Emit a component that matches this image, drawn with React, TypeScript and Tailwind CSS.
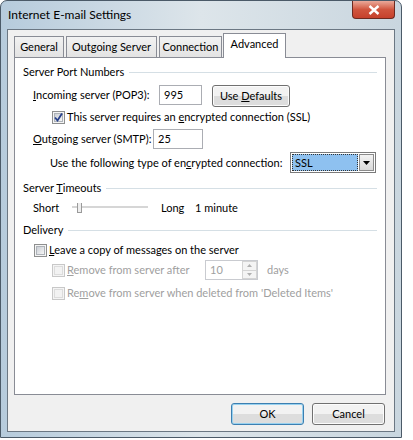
import React from "react";

// Vista-style "Internet E-mail Settings" dialog, Advanced tab

function CheckBox({ checked = false, disabled = false }: { checked?: boolean; disabled?: boolean }) {
  return (
    <span
      className={`flex h-[13px] w-[13px] shrink-0 items-center justify-center border ${
        disabled ? "border-[#c8c8c8] bg-[#f4f4f4]" : "border-[#8e8f8f] bg-[#f4f4f4]"
      }`}
    >
      <span
        className={`flex h-[9px] w-[9px] items-center justify-center border ${
          disabled
            ? "border-[#dcdcdc] bg-[#f2f2f2]"
            : "border-[#aeb3b9] bg-gradient-to-br from-[#cbcfd5] to-[#f6f6f6]"
        }`}
      >
        {checked && (
          <svg width="9" height="9" viewBox="0 0 9 9" className="overflow-visible">
            <path d="M1 4.5 L3.5 7.5 L8 0.5" fill="none" stroke="#27408b" strokeWidth="1.8" />
          </svg>
        )}
      </span>
    </span>
  );
}

function GroupTitle({ children }: { children: React.ReactNode }) {
  return (
    <div className="flex h-[16px] items-center pl-[8px] pr-[8px]">
      <span className="whitespace-nowrap pr-[5px]">{children}</span>
      <div className="h-0 flex-1 border-t border-[#d5dfe5]" />
    </div>
  );
}

function Button({ children, className = "", primary = false }: { children: React.ReactNode; className?: string; primary?: boolean }) {
  return (
    <div
      className={`flex h-[22px] items-center justify-center rounded-[3px] border ${
        primary ? "border-[#3c7fb1] shadow-[inset_0_0_0_1px_#98d1ef]" : "border-[#707070] shadow-[inset_0_0_0_1px_#fcfcfc]"
      } bg-gradient-to-b from-[#f2f2f2] from-50% to-[#dddddd] to-50% ${className}`}
    >
      <span className="whitespace-nowrap">{children}</span>
    </div>
  );
}

const tabs = [
  { label: "General", w: "w-[50px]" },
  { label: "Outgoing Server", w: "w-[91px]" },
  { label: "Connection", w: "w-[63px]" },
];

export default function App() {
  return (
    <div className="h-[440px] w-[413px] bg-white font-['Lato',sans-serif] text-[11px] leading-[16px] text-black">
      <div className="flex h-[438px] w-[402px] flex-col rounded-t-[7px] border border-[#4b5a68] bg-gradient-to-r from-[#b6cbdc] via-[#dde5ea] to-[#c9d6df]">
        {/* title bar */}
        <div className="flex h-[28px] shrink-0 items-start justify-between pl-[7px] pr-[6px]">
          <span className="pt-[6px] text-[12px] text-black">Internet E-mail Settings</span>
          <div className="flex h-[18px] w-[43px] items-center justify-center rounded-b-[4px] border border-t-0 border-[#6d2a20] bg-gradient-to-b from-[#e9a99a] via-[#d0553e] to-[#c6412c]">
            <svg width="12" height="10" viewBox="0 0 12 10">
              <path d="M1.5 1 L10.5 9 M10.5 1 L1.5 9" stroke="#ffffff" strokeWidth="2.4" />
            </svg>
          </div>
        </div>

        {/* client area */}
        <div className="mx-[6px] mb-[5px] flex flex-1 flex-col border border-[#6b7783] bg-[#f0f0f0]">
          {/* tabs */}
          <div className="mt-[3px] flex h-[24px] items-end pl-[6px]">
            {tabs.map((t) => (
              <div
                key={t.label}
                className={`mr-[2px] flex h-[21px] items-center justify-center whitespace-nowrap border border-b-0 border-[#898c95] bg-gradient-to-b from-[#f2f2f2] to-[#e3e3e3] ${t.w}`}
              >
                {t.label}
              </div>
            ))}
            <div className="relative -mb-px ml-[-1px] flex h-[25px] w-[63px] items-start justify-center border border-b-0 border-[#898c95] bg-white pt-[2px]">
              Advanced
            </div>
          </div>

          {/* tab panel */}
          <div className="ml-[6px] flex h-[338px] w-[372px] flex-col border border-[#898c95] bg-white">
            <div className="mt-[6px]">
              <GroupTitle>Server Port Numbers</GroupTitle>
            </div>

            <div className="mt-[5px] flex h-[22px] items-start pl-[18px]">
              <span className="mt-[2px] w-[126px] whitespace-nowrap">
                <u>I</u>ncoming server (POP3):
              </span>
              <div className="flex h-[20px] w-[43px] items-center border border-[#abadb3] px-[4px]">995</div>
              <Button className="ml-[10px] w-[78px]">
                Use <u>D</u>efaults
              </Button>
            </div>

            <div className="mt-[2px] flex h-[16px] items-center gap-[2px] pl-[37px]">
              <CheckBox checked />
              <span className="whitespace-nowrap">
                This server requires an <u>e</u>ncrypted connection (SSL)
              </span>
            </div>

            <div className="mt-[4px] flex h-[20px] items-center pl-[18px]">
              <span className="w-[120px] whitespace-nowrap">
                <u>O</u>utgoing server (SMTP):
              </span>
              <div className="flex h-[20px] w-[50px] items-center border border-[#abadb3] px-[4px]">25</div>
            </div>

            <div className="mt-[3px] flex h-[21px] items-center pl-[35px]">
              <span className="w-[240px] whitespace-nowrap">
                Use the following type of en<u>c</u>rypted connection:
              </span>
              <div className="flex h-[21px] w-[86px] items-stretch border border-[#7a7a7a] bg-white p-[1px]">
                <div className="flex flex-1 items-center border border-dotted border-[#333] bg-[#8ec1f0] pl-[2px]">SSL</div>
                <div className="ml-[1px] flex w-[15px] items-center justify-center border border-[#8b8b8b] bg-gradient-to-b from-[#f3f3f3] to-[#d9d9d9]">
                  <svg width="7" height="4" viewBox="0 0 7 4">
                    <path d="M0 0 H7 L3.5 4 Z" fill="#000" />
                  </svg>
                </div>
              </div>
            </div>

            <div className="mt-[7px]">
              <GroupTitle>
                Server <u>T</u>imeouts
              </GroupTitle>
            </div>

            <div className="mt-[4px] flex h-[16px] items-center pl-[18px]">
              <span className="w-[39px]">Short</span>
              <div className="relative h-[12px] w-[76px]">
                <div className="absolute left-0 right-0 top-[4px] h-[2px] border border-[#d6d6d6] bg-[#e8e8e8]" />
                <div className="absolute left-[5px] top-[1px] h-[10px] w-[5px] border border-t-0 border-[#9a9a9a] bg-[#eeeeee]" />
              </div>
              <span className="ml-[13px] w-[34px]">Long</span>
              <span className="whitespace-nowrap">1 minute</span>
            </div>

            <div className="mt-[6px]">
              <GroupTitle>Delivery</GroupTitle>
            </div>

            <div className="mt-[4px] flex h-[16px] items-center gap-[2px] pl-[19px]">
              <CheckBox />
              <span className="whitespace-nowrap">
                <u>L</u>eave a copy of messages on the server
              </span>
            </div>

            <div className="mt-[2px] flex h-[20px] items-center pl-[37px] text-[#a0a0a0]">
              <CheckBox disabled />
              <span className="ml-[2px] w-[138px] whitespace-nowrap">
                <u>R</u>emove from server after
              </span>
              <div className="flex h-[20px] w-[53px] items-stretch border border-[#c9cbd0] bg-white">
                <span className="flex flex-1 items-center pl-[4px]">10</span>
                <div className="flex w-[15px] flex-col">
                  <div className="flex flex-1 items-center justify-center border border-[#d4d4d4] bg-[#f4f4f4]">
                    <svg width="5" height="3" viewBox="0 0 5 3">
                      <path d="M0 3 H5 L2.5 0 Z" fill="#b0b0b0" />
                    </svg>
                  </div>
                  <div className="flex flex-1 items-center justify-center border border-t-0 border-[#d4d4d4] bg-[#f4f4f4]">
                    <svg width="5" height="3" viewBox="0 0 5 3">
                      <path d="M0 0 H5 L2.5 3 Z" fill="#b0b0b0" />
                    </svg>
                  </div>
                </div>
              </div>
              <span className="ml-[9px]">days</span>
            </div>

            <div className="mt-[5px] flex h-[16px] items-center gap-[2px] pl-[37px] text-[#a0a0a0]">
              <CheckBox disabled />
              <span className="whitespace-nowrap">
                Re<u>m</u>ove from server when deleted from 'Deleted Items'
              </span>
            </div>
          </div>

          {/* bottom buttons */}
          <div className="mt-[8px] flex justify-end gap-[8px] pr-[9px]">
            <Button primary className="w-[73px]">
              OK
            </Button>
            <Button className="w-[73px]">Cancel</Button>
          </div>
        </div>
      </div>
    </div>
  );
}
